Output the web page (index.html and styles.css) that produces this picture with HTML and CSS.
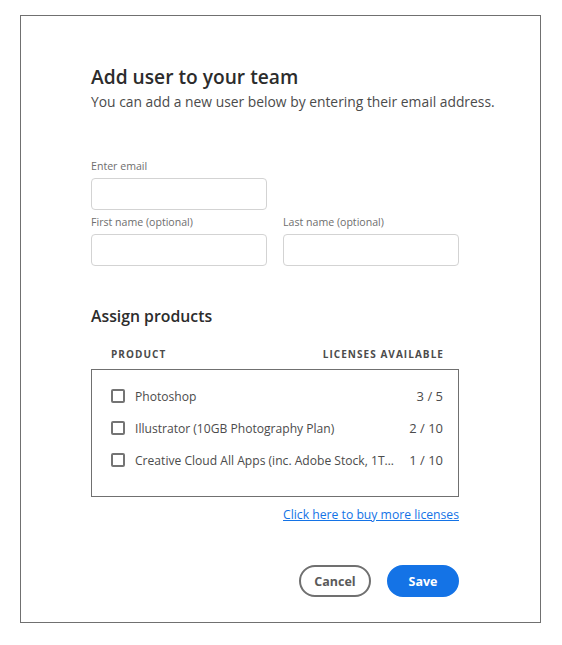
FILE: index.html
```html
<!DOCTYPE html>
<html>
<head>
<meta charset="utf-8">
<link rel="stylesheet" href="styles.css">
</head>
<body>
<div class="dialog">
  <div class="content">
    <h1 class="title">Add user to your team</h1>
    <p class="subtitle">You can add a new user below by entering their email address.</p>

    <div class="form">
      <div class="field">
        <label class="label">Enter email</label>
        <div class="input"></div>
      </div>
      <div class="row">
        <div class="field">
          <label class="label">First name (optional)</label>
          <div class="input"></div>
        </div>
        <div class="field">
          <label class="label">Last name (optional)</label>
          <div class="input"></div>
        </div>
      </div>
    </div>

    <h2 class="section">Assign products</h2>
    <div class="thead">
      <span>PRODUCT</span>
      <span>LICENSES AVAILABLE</span>
    </div>
    <div class="table">
      <div class="trow">
        <span class="check"></span>
        <span class="name">Photoshop</span>
        <span class="count">3 / 5</span>
      </div>
      <div class="trow">
        <span class="check"></span>
        <span class="name">Illustrator (10GB Photography Plan)</span>
        <span class="count">2 / 10</span>
      </div>
      <div class="trow">
        <span class="check"></span>
        <span class="name">Creative Cloud All Apps (inc. Adobe Stock, 1T…</span>
        <span class="count">1 / 10</span>
      </div>
    </div>
    <div class="linkrow"><a class="link" href="#">Click here to buy more licenses</a></div>

    <div class="actions">
      <button class="btn btn-secondary">Cancel</button>
      <button class="btn btn-primary">Save</button>
    </div>
  </div>
</div>
</body>
</html>
```
FILE: styles.css
```css
* { box-sizing: border-box; }
html, body { margin: 0; padding: 0; background: #fff; }
body {
  font-family: "Open Sans", "Liberation Sans", sans-serif;
  color: #2c2c2c;
}
.dialog {
  width: 521px;
  height: 608px;
  margin: 15px 0 0 20px;
  border: 1px solid #707070;
  padding: 49px 0 0 70px;
}
.content { width: 368px; }
.title {
  margin: 0;
  font-size: 19.2px;
  font-weight: 600;
  line-height: 24px;
  color: #2c2c2c;
  white-space: nowrap;
}
.subtitle {
  margin: 2px 0 0;
  font-size: 13.85px;
  line-height: 22px;
  color: #4b4b4b;
  white-space: nowrap;
}
.form { margin-top: 45px; display: flex; flex-direction: column; gap: 4px; }
.row { display: flex; gap: 16px; }
.field { display: flex; flex-direction: column; width: 176px; }
.label {
  font-size: 10.6px;
  line-height: 16px;
  color: #6e6e6e;
  margin-bottom: 4px;
}
.input {
  height: 32px;
  border: 1px solid #d3d3d3;
  border-radius: 4px;
}
.section {
  margin: 38px 0 0;
  font-size: 15.8px;
  font-weight: 600;
  line-height: 24px;
  color: #2c2c2c;
}
.thead {
  display: flex;
  justify-content: space-between;
  padding: 0 15px 0 20px;
  margin-top: 18px;
  font-size: 10px;
  font-weight: 700;
  letter-spacing: 1.05px;
  line-height: 16px;
  color: #4b4b4b;
}
.table {
  margin-top: 7px;
  height: 128px;
  border: 1px solid #707070;
  padding: 10px 15px 0 19px;
}
.trow {
  display: flex;
  align-items: center;
  height: 32px;
}
.check {
  width: 14px;
  height: 14px;
  border: 2px solid #747474;
  border-radius: 2px;
  flex: none;
}
.name {
  margin: 0 12px 0 10px;
  font-size: 12.1px;
  color: #4b4b4b;
  white-space: nowrap;
  flex: 1;
  min-width: 0;
}
.count {
  flex: none;
  width: 36px;
  text-align: right;
  font-size: 13px;
  color: #4b4b4b;
}
.linkrow { display: flex; justify-content: flex-end; margin-top: 9px; }
.link {
  font-size: 12.2px;
  line-height: 18px;
  color: #1473e6;
  text-decoration: underline;
}
.actions {
  display: flex;
  justify-content: flex-end;
  gap: 16px;
  margin-top: 41px;
}
.btn {
  height: 32px;
  width: 72px;
  border-radius: 16px;
  font-family: inherit;
  font-size: 12.5px;
  font-weight: 700;
  padding: 0;
  cursor: pointer;
}
.btn-secondary {
  background: #fff;
  border: 2px solid #707070;
  color: #5a5a5a;
}
.btn-primary {
  background: #1473e6;
  border: 2px solid #1473e6;
  color: #fff;
}
```
